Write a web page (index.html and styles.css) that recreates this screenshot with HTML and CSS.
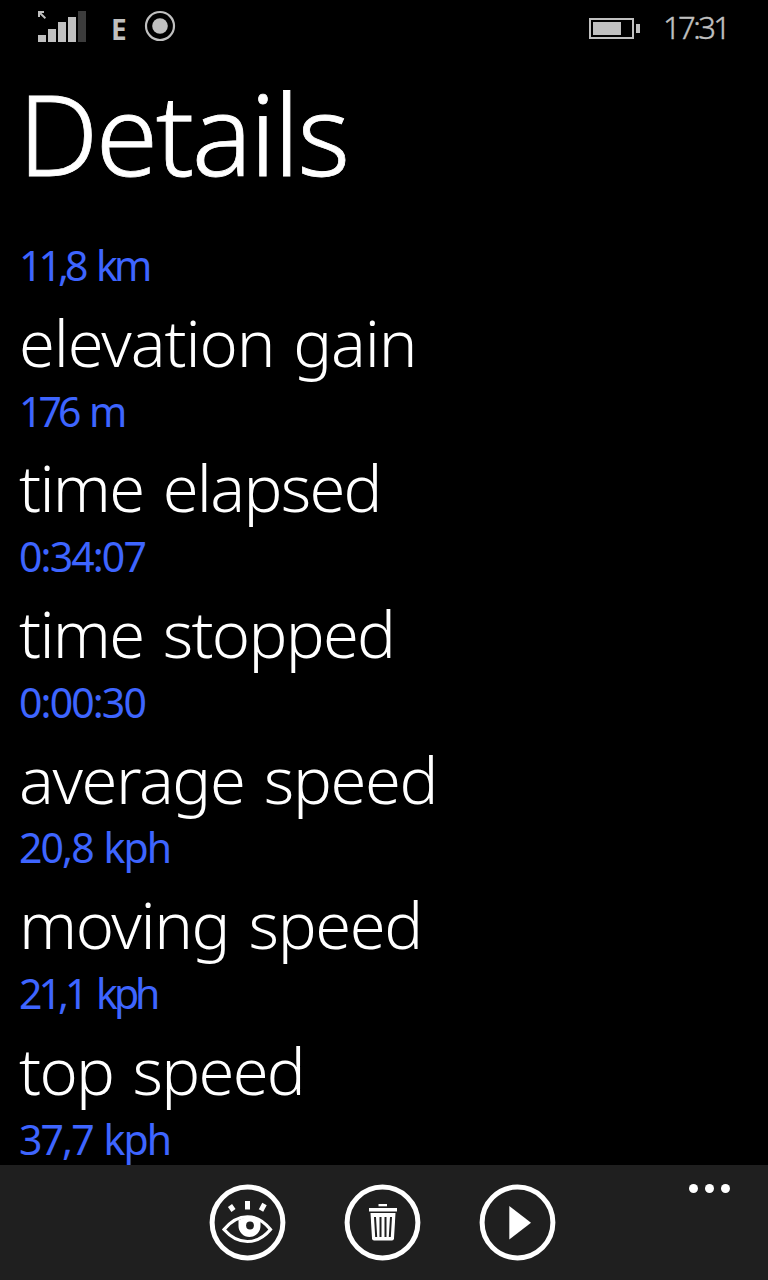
FILE: index.html
```html
<!DOCTYPE html>
<html lang="en">
<head>
    <meta charset="UTF-8">
    <title>Details</title>
    <link rel="stylesheet" href="styles.css">
</head>
<body>
    <div class="phone">
        <header class="status-bar">
            <!-- Signal -->
            <svg class="signal" width="48" height="32" fill="#c0c0c0">
                <path d="M0 0h6v2H3.5L8 6.5 6.800 8 2 3.5V6H0z" />
                <rect x="0" y="24" width="8" height="7" />
                <rect x="10" y="18" width="8" height="13" />
                <rect x="20" y="11" width="8" height="20" />
                <rect x="30" y="6" width="8" height="25" />
                <rect x="40" y="0" width="8" height="31" fill="#3c3c3c" />
            </svg>
            <span class="network">E</span>
            <!-- Location ring -->
            <svg class="ring" width="32" height="32">
                <circle cx="16" cy="16" r="14" fill="none" stroke="#c0c0c0" stroke-width="2.2" />
                <circle cx="16" cy="16" r="7.8" fill="#c0c0c0" />
            </svg>
            <!-- Battery -->
            <svg class="battery" width="51" height="21">
                <rect x="1" y="1" width="43" height="19" fill="none" stroke="#c0c0c0" stroke-width="2" />
                <rect x="4" y="4" width="28" height="13" fill="#c0c0c0" />
                <rect x="47" y="6" width="4" height="9" fill="#c0c0c0" />
            </svg>
            <span class="clock">17:31</span>
        </header>

        <h1 class="title">Details</h1>

        <main class="stats">
            <div class="value tight">11,8 km</div>
            <div class="label wide">elevation gain</div>
            <div class="value tight">176 m</div>
            <div class="label narrow">time elapsed</div>
            <div class="value">0:34:07</div>
            <div class="label narrow">time stopped</div>
            <div class="value">0:00:30</div>
            <div class="label">average speed</div>
            <div class="value">20,8 kph</div>
            <div class="label">moving speed</div>
            <div class="value tight">21,1 kph</div>
            <div class="label narrow">top speed</div>
            <div class="value">37,7 kph</div>
        </main>

        <footer class="app-bar">
            <!-- View -->
            <svg class="button" width="77" height="77" viewBox="0 0 77 77" fill="none" stroke="#fff">
                <circle cx="38.5" cy="38.5" r="35.4" stroke-width="5" />
                <path d="M15 45.5C29 28.5 48 28.5 61.5 45.5C48 61.5 29 61.5 15 45.5z" stroke-width="3.2" />
                <path d="M29.5 36Q38 31 51.5 36V42a11 11 0 0 1-22 0z" fill="#fff" stroke="none" />
                <circle cx="41" cy="41.5" r="3.9" fill="#1f1f1f" stroke="none" />
                <path d="M21 21.5l3.5 5M38.5 17v8.5M55.5 20l-3.5 6.5" stroke-width="5" />
            </svg>
            <!-- Delete -->
            <svg class="button" width="77" height="77" viewBox="0 0 77 77" fill="#fff">
                <circle cx="38.5" cy="38.5" r="35.4" fill="none" stroke="#fff" stroke-width="5" />
                <rect x="34.5" y="20" width="8.5" height="2.3" />
                <rect x="25" y="24" width="28" height="3.5" />
                <path d="M26.5 29h25l-1.5 25.5q-.2 2-2 2h-18q-1.8 0-2-2z" />
                <path d="M31 33l1.2 20M36.5 33v20M41.5 33v20M47 33l-1.2 20" stroke="#1f1f1f" stroke-width="2" />
            </svg>
            <!-- Play -->
            <svg class="button" width="77" height="77" viewBox="0 0 77 77" fill="#fff">
                <circle cx="38.5" cy="38.5" r="35.4" fill="none" stroke="#fff" stroke-width="5" />
                <path d="M30.3 22L52 38.7 30.3 55.5z" />
            </svg>
            <svg class="more" width="41" height="9" fill="#fff">
                <circle cx="4.5" cy="4.5" r="4.5" />
                <circle cx="20.5" cy="4.5" r="4.5" />
                <circle cx="36.5" cy="4.5" r="4.5" />
            </svg>
        </footer>
    </div>
</body>
</html>
```
FILE: styles.css
```css
body {
    margin: 0;
    background-color: #000;
    color: #fff;
    font-family: "Noto Sans", "Open Sans", sans-serif;
}
.phone {
    display: flex;
    flex-direction: column;
    width: 768px;
    height: 1280px;
    overflow: hidden;
}
.status-bar {
    display: flex;
    align-items: flex-start;
    box-sizing: border-box;
    height: 54px;
    padding: 10px 39px 0 38px;
    color: #c0c0c0;
}
.signal {
    margin-top: 1px;
}
.network {
    margin: 2px 0 0 25px;
    width: 33px;
    font-family: "Open Sans", sans-serif;
    font-size: 28px;
    line-height: 34px;
    font-weight: 700;
}
.battery {
    margin: 8px 0 0 auto;
}
.clock {
    width: 66px;
    margin-left: 23px;
    font-size: 31px;
    line-height: 35px;
    font-weight: 300;
    letter-spacing: -2.6px;
    white-space: nowrap;
    -webkit-text-stroke: 0.4px #c0c0c0;
}
.title {
    height: 184px;
    margin: 0;
    padding-left: 18px;
    box-sizing: border-box;
    font-size: 113px;
    line-height: 156px;
    font-weight: 300;
    letter-spacing: -2.5px;
    -webkit-text-stroke: 0.8px #fff;
}
.stats {
    flex: 1;
    min-height: 0;
    padding-left: 19px;
    white-space: nowrap;
}
.label {
    margin-bottom: -1.2px;
    font-size: 65px;
    line-height: 86px;
    font-weight: 300;
    letter-spacing: -1.4px;
    word-spacing: 4px;
}
.label.wide {
    letter-spacing: -1.1px;
    word-spacing: 3px;
}
.label.narrow {
    letter-spacing: -1.7px;
}
.value {
    margin-bottom: 6.4px;
    font-size: 41px;
    line-height: 54.4px;
    color: #3e65ff;
    letter-spacing: -1.9px;
    word-spacing: 2px;
}
.value.tight {
    letter-spacing: -4px;
    word-spacing: 5px;
}
.app-bar {
    display: flex;
    justify-content: center;
    gap: 58px;
    position: relative;
    box-sizing: border-box;
    height: 115px;
    padding: 19px 3px 0 0;
    background-color: #1f1f1f;
}
.more {
    position: absolute;
    top: 19px;
    right: 38px;
}
```
